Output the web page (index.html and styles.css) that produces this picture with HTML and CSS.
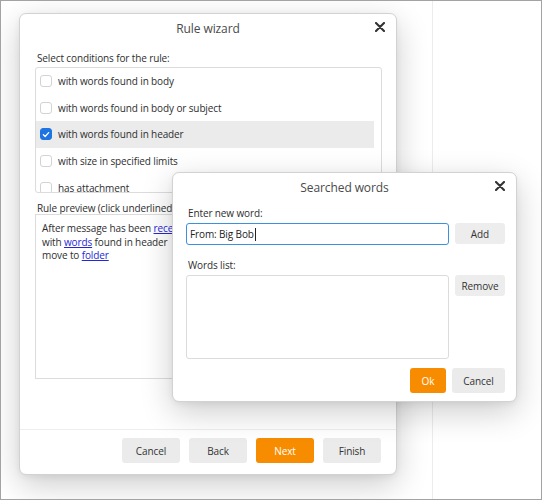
FILE: index.html
```html
<!DOCTYPE html>
<html>
<head>
<meta charset="utf-8">
<link rel="stylesheet" href="styles.css">
</head>
<body>
<div class="desktop">
  <div class="pane-main"></div>
  <div class="pane-side"></div>

  <div class="dialog wizard">
    <div class="dlg-head">
      <span></span>
      <div class="dlg-title">Rule wizard</div>
      <button class="close" aria-label="Close"><svg width="10" height="10" viewBox="0 0 10 10"><path d="M1 1L9 9M9 1L1 9" stroke="#333" stroke-width="2.1" stroke-linecap="round"/></svg></button>
    </div>
    <div class="wiz-body">
      <div class="label">Select conditions for the rule:</div>
      <div class="cond-list">
        <div class="cond"><span class="cb"></span>with words found in body</div>
        <div class="cond"><span class="cb"></span>with words found in body or subject</div>
        <div class="cond selected"><span class="cb checked"><svg width="11" height="11" viewBox="0 0 11 11"><path d="M2.6 5.7L4.6 7.7L8.4 3.4" fill="none" stroke="#fff" stroke-width="1.4" stroke-linecap="round" stroke-linejoin="round"/></svg></span>with words found in header</div>
        <div class="cond"><span class="cb"></span>with size in specified limits</div>
        <div class="cond"><span class="cb"></span>has attachment</div>
      </div>
      <div class="label preview-label">Rule preview (click underlined values to edit):</div>
      <div class="preview">
        <div>After message has been <a href="#">received</a></div>
        <div>with <a href="#">words</a> found in header</div>
        <div>move to <a href="#">folder</a></div>
      </div>
    </div>
    <div class="wiz-foot">
      <button class="btn w58">Cancel</button>
      <button class="btn w58">Back</button>
      <button class="btn w58 primary">Next</button>
      <button class="btn w58">Finish</button>
    </div>
  </div>

  <div class="dialog words">
    <div class="dlg-head">
      <span></span>
      <div class="dlg-title">Searched words</div>
      <button class="close" aria-label="Close"><svg width="10" height="10" viewBox="0 0 10 10"><path d="M1 1L9 9M9 1L1 9" stroke="#333" stroke-width="2.1" stroke-linecap="round"/></svg></button>
    </div>
    <div class="words-body">
      <div class="label wl1">Enter new word:</div>
      <div class="input">From: Big Bob<span class="caret"></span></div>
      <button class="btn side">Add</button>
      <div class="label wl2">Words list:</div>
      <div class="wlist"></div>
      <button class="btn side">Remove</button>
    </div>
    <div class="words-foot">
      <button class="btn primary ok">Ok</button>
      <button class="btn cancel2">Cancel</button>
    </div>
  </div>
</div>
</body>
</html>
```

FILE: styles.css
```css
* { box-sizing: border-box; }
html, body { margin: 0; padding: 0; }
body {
  width: 542px;
  height: 500px;
  font-family: "Open Sans", "Noto Sans", sans-serif;
  font-size: 10px;
  letter-spacing: -0.12px;
  color: #2e2e2e;
  background: #fff;
}
.desktop {
  position: relative;
  width: 542px;
  height: 500px;
  border: 1px solid #a3a3a3;
  display: flex;
  overflow: hidden;
}
.pane-main {
  width: 432px;
  border-right: 1px solid #ececec;
}
.pane-side { flex: 1; }

.dialog {
  position: absolute;
  background: #fff;
  border: 1px solid #d2d2d2;
  border-radius: 7px;
  box-shadow: 0 10px 32px rgba(0,0,0,0.2), 0 2px 6px rgba(0,0,0,0.06);
  display: flex;
  flex-direction: column;
}
.wizard { left: 18px; top: 12px; width: 378px; height: 462px; }
.words { left: 171px; top: 171px; width: 345px; height: 230px; }

.dlg-head {
  height: 28px;
  display: grid;
  grid-template-columns: 1fr auto 1fr;
  align-items: center;
}
.dlg-title {
  font-size: 12px;
  letter-spacing: -0.1px;
  color: #4a4a4a;
  padding-top: 1px;
}
.close {
  justify-self: end;
  margin-right: 11px;
  margin-top: -3px;
  width: 10px;
  height: 10px;
  padding: 0;
  border: 0;
  background: none;
  display: flex;
}

.label { line-height: 14px; color: #2e2e2e; }
.wiz-body {
  flex: 1;
  padding: 0 14px 0 15px;
  display: flex;
  flex-direction: column;
}
.wiz-body > .label:first-child { margin-top: 9px; padding-left: 2px; }
.cond-list {
  margin-top: 2px;
  height: 126px;
  border: 1px solid #dcdcdc;
  border-radius: 3px;
  overflow: hidden;
}
.cond {
  height: 26.6px;
  display: flex;
  align-items: center;
  margin-right: 7px;
  padding-left: 4px;
  gap: 6px;
}
.cond.selected { background: #ebebeb; }
.cb {
  width: 12px;
  height: 12px;
  border: 1px solid #d3d3d3;
  border-radius: 3px;
  background: #fff;
  display: flex;
  align-items: center;
  justify-content: center;
}
.cb.checked {
  background: #1f74e4;
  border-color: #1f74e4;
}
.preview-label {
  margin-top: 9px;
  padding-left: 2px;
  line-height: 12px;
  white-space: nowrap;
}
.preview {
  height: 165px;
  border: 1px solid #dcdcdc;
  padding: 7px 6px;
  line-height: 13.5px;
}
.preview a { color: #2626d9; text-decoration: underline; }

.wiz-foot {
  border-top: 1px solid #eeeeee;
  padding: 8px 15px 11px 0;
  display: flex;
  justify-content: flex-end;
  gap: 9px;
}
.btn {
  font-family: inherit;
  font-size: 10px;
  letter-spacing: -0.1px;
  color: #333;
  background: #ebebeb;
  border: 0;
  border-radius: 3px;
  height: 25px;
  padding: 0;
}
.btn.w58 { width: 58px; }
.btn.primary { background: #f88c00; color: #fff; }

.words-body {
  padding: 0 11px 0 13px;
  display: grid;
  grid-template-columns: 263px 50px;
  column-gap: 6px;
}
.wl1 { grid-column: 1 / 3; margin-top: 5px; margin-bottom: 3px; padding-left: 2px; }
.wl2 { grid-column: 1 / 3; margin-top: 13px; margin-bottom: 3px; padding-left: 2px; }
.input {
  height: 22px;
  border: 1px solid #3d8fe0;
  border-radius: 3px;
  padding: 0 3px;
  display: flex;
  align-items: center;
  color: #222;
}
.caret { display: inline-block; width: 1px; height: 13px; background: #222; margin-left: 1px; }
.btn.side { height: 21px; background: #ededed; }
.wlist {
  height: 84px;
  border: 1px solid #dcdcdc;
  border-radius: 3px;
}
.words-foot {
  margin-top: 9px;
  padding-right: 11px;
  display: flex;
  justify-content: flex-end;
  gap: 6px;
}
.ok { width: 36px; }
.cancel2 { width: 53px; }
```
